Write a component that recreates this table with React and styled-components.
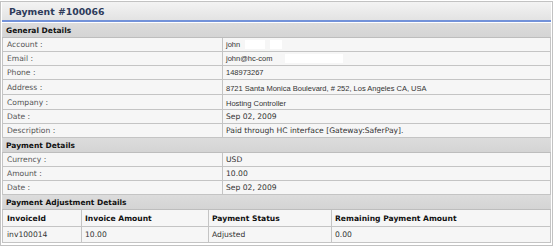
import React from "react";
import styled, { createGlobalStyle } from "styled-components";

const Global = createGlobalStyle`
  html, body { margin: 0; padding: 0; background: #ffffff; }
  body { font-family: "DejaVu Sans", Verdana, sans-serif; }
`;

const Panel = styled.div`
  width: 551px;
  margin-top: 1px;
  border: 1px solid #c2c2c2;
  background: #ffffff;
  padding: 0 0 2px 0;
`;

const TitleBar = styled.div`
  height: 18px;
  margin: 0 1px;
  display: flex;
  align-items: center;
  padding-left: 7px;
  background: linear-gradient(#f3f3f3, #e3e3e3);
  border-bottom: 2px solid #7392d9;
  font-family: "DejaVu Sans", Verdana, sans-serif;
  font-weight: bold;
  font-size: 9.3px;
  color: #2e3b5b;
`;

const Table = styled.div`
  margin: 1px 1px 0 1px;
  display: flex;
  flex-direction: column;
`;

const SectionHeader = styled.div`
  height: 14px;
  display: flex;
  align-items: center;
  padding-left: 4px;
  background: linear-gradient(#dcdcdc, #d4d4d4);
  border-bottom: 1px solid #bdbdbd;
  font-weight: bold;
  font-size: 7.5px;
  color: #111;
`;

const Row = styled.div`
  display: grid;
  grid-template-columns: ${(p) => p.$cols};
  min-height: ${(p) => p.$h || 13}px;
  border-bottom: 1px solid #c4c4c4;
  background: #f6f6f6;
`;

const Cell = styled.div`
  display: flex;
  align-items: ${(p) => (p.$low ? "flex-end" : "center")};
  padding: 0 3px ${(p) => (p.$low ? "1px" : "0")} ${(p) => (p.$first ? "4px" : "3px")};
  border-left: 1px solid #c4c4c4;
  border-right: ${(p) => (p.$last ? "1px solid #c4c4c4" : "none")};
  font-family: ${(p) =>
    p.$arial ? '"Liberation Sans", Arial, sans-serif' : '"DejaVu Sans", Verdana, sans-serif'};
  font-size: ${(p) => (p.$arial ? "7.5px" : "7.6px")};
  font-weight: ${(p) => (p.$bold ? "bold" : "normal")};
  color: ${(p) => (p.$label ? "#555" : p.$bold ? "#111" : "#333")};
  white-space: nowrap;
`;

const Redact = styled.span`
  display: inline-block;
  width: ${(p) => p.$w}px;
  height: 9px;
  margin-left: ${(p) => p.$ml}px;
  background: #ffffff;
`;

const DCOLS = "220px 1fr";
const ACOLS = "79px 127px 123px 1fr";

const general = [
  { l: "Account :", v: "john", arial: true, redact: [[5, 20], [5, 12]] },
  { l: "Email :", v: "john@hc-com", arial: true, redact: [[13, 58]] },
  { l: "Phone :", v: "148973267", arial: true },
  { l: "Address :", v: "8721 Santa Monica Boulevard, # 252, Los Angeles CA, USA", arial: true, low: true, h: 14 },
  { l: "Company :", v: "Hosting Controller", arial: true, low: true, h: 14 },
  { l: "Date :", v: "Sep 02, 2009" },
  { l: "Description :", v: "Paid through HC interface [Gateway:SaferPay]." },
];

const payment = [
  { l: "Currency :", v: "USD" },
  { l: "Amount :", v: "10.00" },
  { l: "Date :", v: "Sep 02, 2009" },
];

function DetailRow({ d }) {
  return (
    <Row $cols={DCOLS} $h={d.h}>
      <Cell $first $label>{d.l}</Cell>
      <Cell $last $arial={d.arial} $low={d.low}>
        {d.v}
        {d.redact && d.redact.map(([ml, w], i) => <Redact key={i} $ml={ml} $w={w} />)}
      </Cell>
    </Row>
  );
}

export default function App() {
  return (
    <>
      <Global />
      <Panel>
        <TitleBar>Payment #100066</TitleBar>
        <Table>
          <SectionHeader>General Details</SectionHeader>
          {general.map((d, i) => (
            <DetailRow key={i} d={d} />
          ))}
          <SectionHeader>Payment Details</SectionHeader>
          {payment.map((d, i) => (
            <DetailRow key={i} d={d} />
          ))}
          <SectionHeader>Payment Adjustment Details</SectionHeader>
          <Row $cols={ACOLS} $h={16}>
            <Cell $first $bold>InvoiceId</Cell>
            <Cell $bold>Invoice Amount</Cell>
            <Cell $bold>Payment Status</Cell>
            <Cell $last $bold>Remaining Payment Amount</Cell>
          </Row>
          <Row $cols={ACOLS} $h={15}>
            <Cell $first>inv100014</Cell>
            <Cell>10.00</Cell>
            <Cell>Adjusted</Cell>
            <Cell $last>0.00</Cell>
          </Row>
        </Table>
      </Panel>
    </>
  );
}
